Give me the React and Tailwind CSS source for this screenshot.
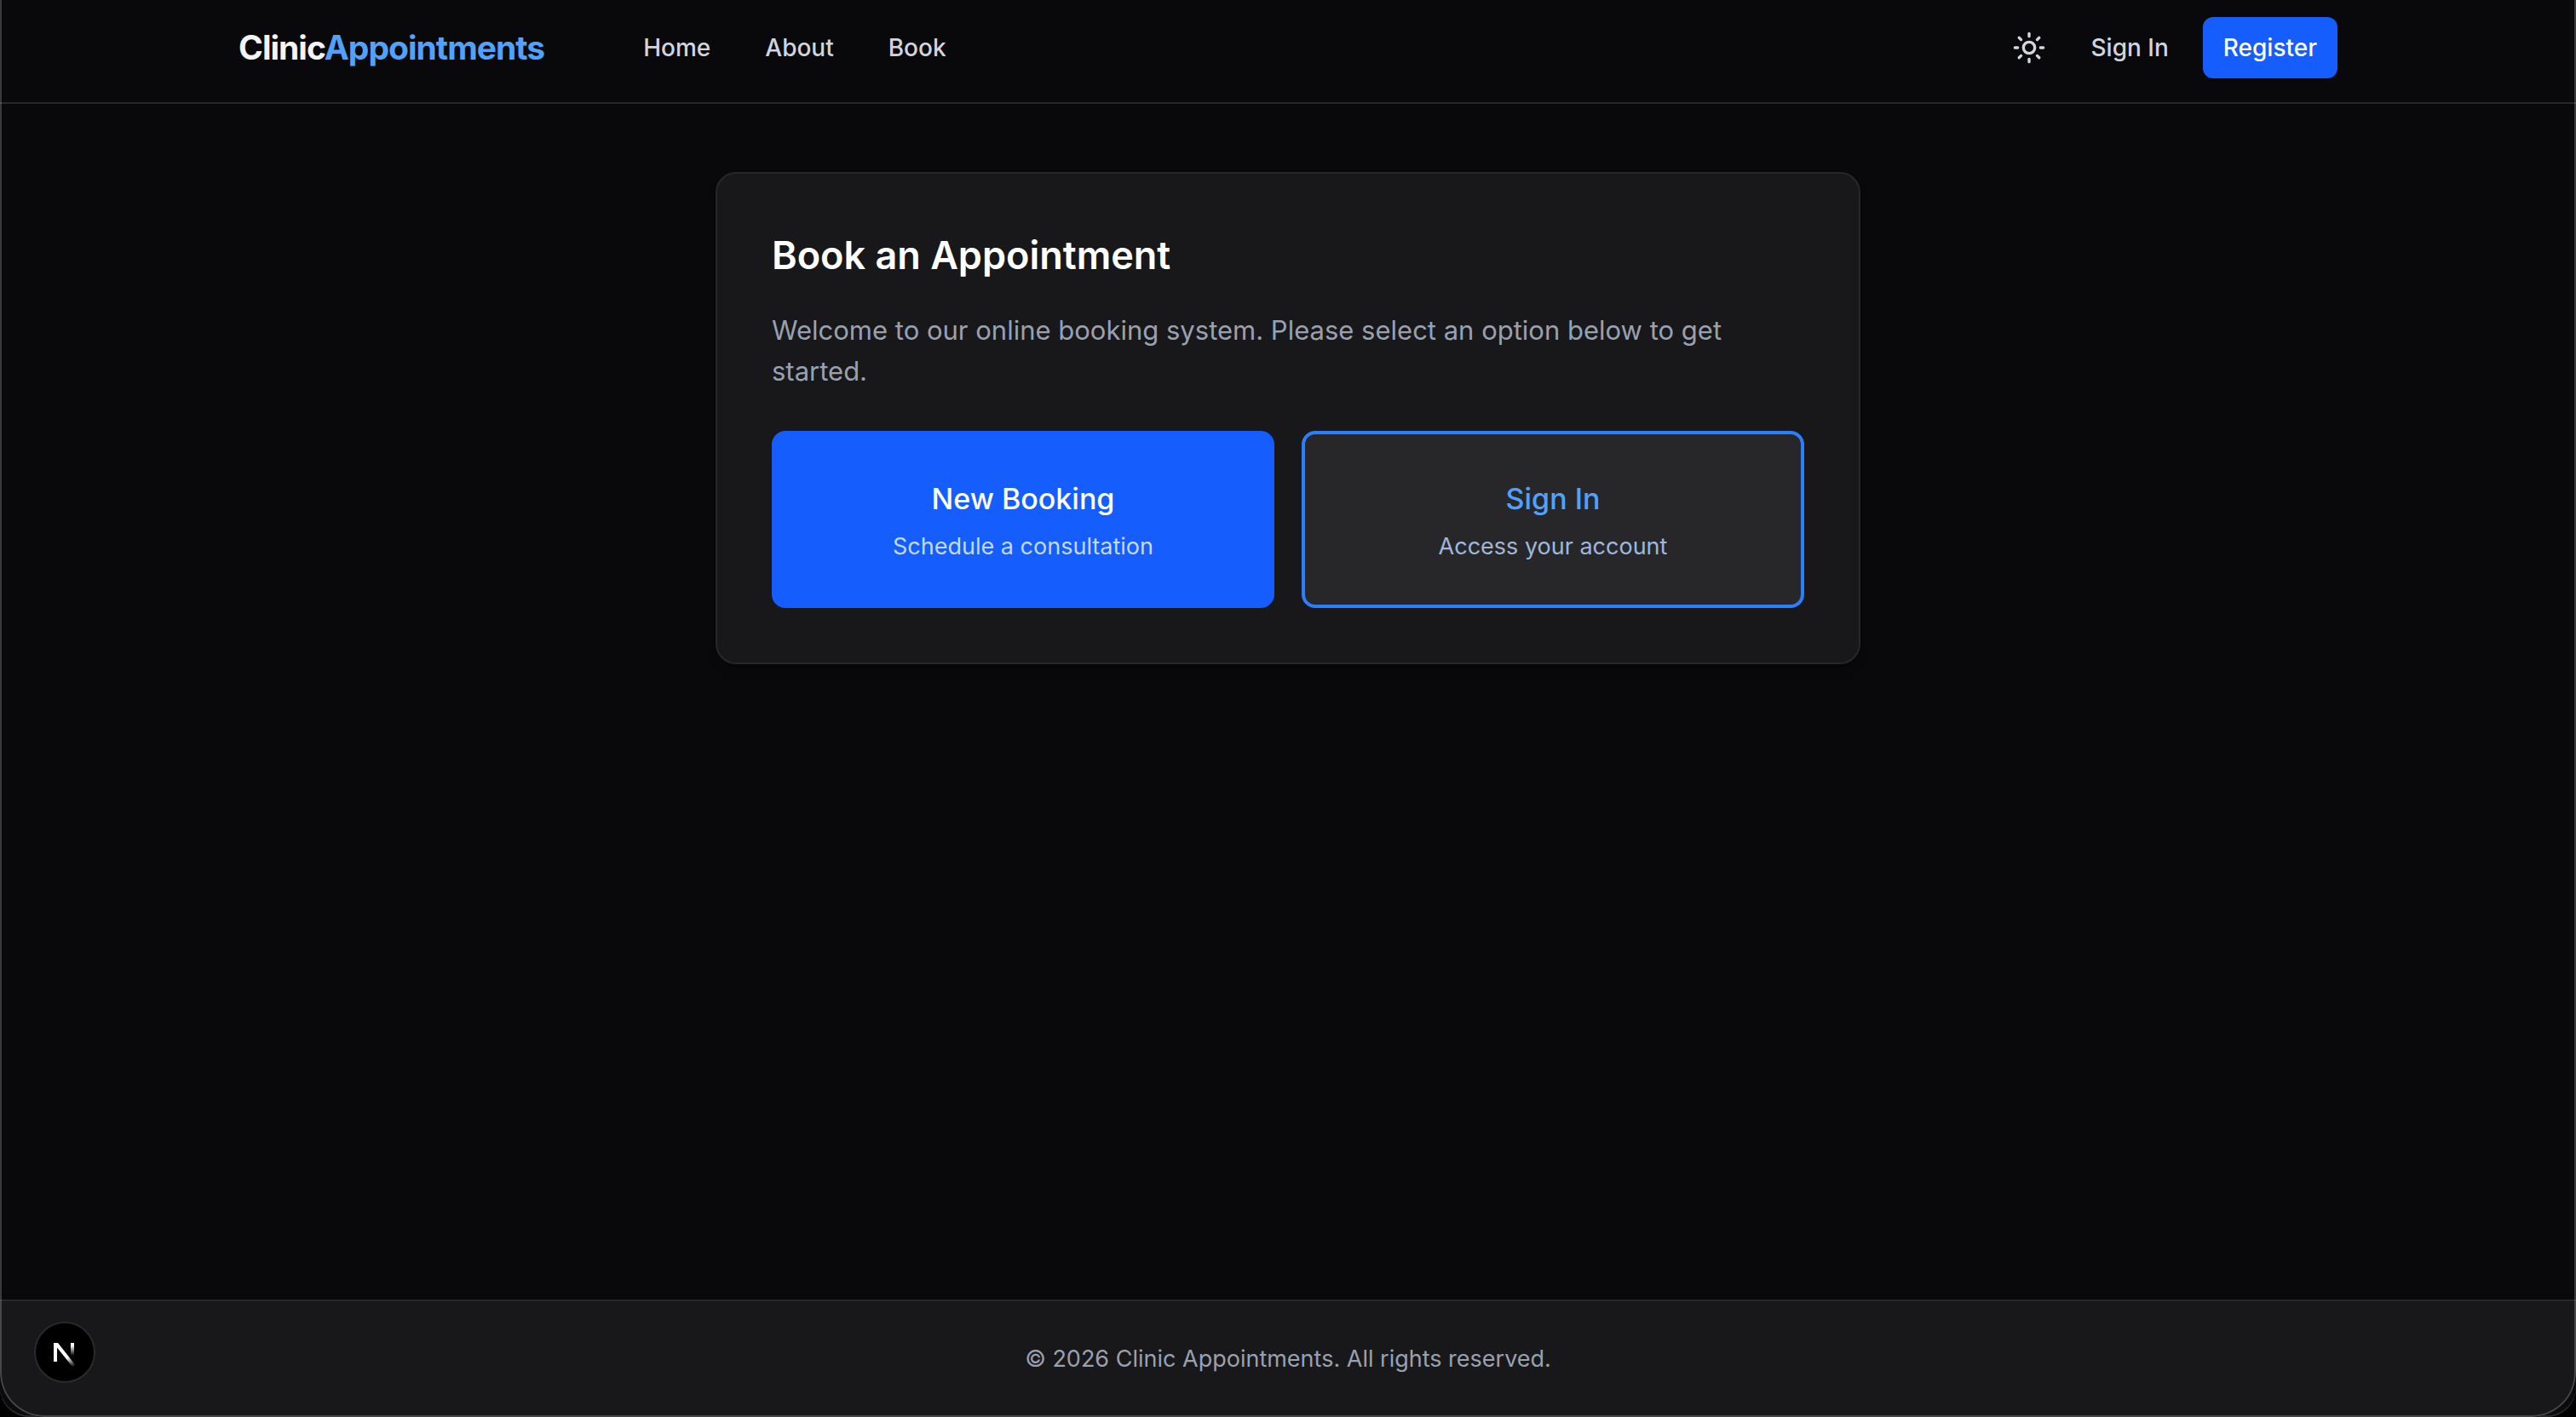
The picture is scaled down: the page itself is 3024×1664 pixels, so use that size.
import { Sun } from 'lucide-react';

const links = ['Home', 'About', 'Book'];

function NextBadge() {
  return (
    <button aria-label="Open Next.js Dev Tools" className="absolute bottom-10 left-10 size-18 rounded-full border-2 border-[#2a2a2a] bg-black">
      <svg viewBox="0 0 68 68" fill="none" className="size-full">
        <defs>
          <linearGradient id="stem" x1="43" y1="26" x2="43" y2="38" gradientUnits="userSpaceOnUse">
            <stop stopColor="#fff" />
            <stop offset="1" stopColor="#fff" stopOpacity="0" />
          </linearGradient>
          <linearGradient id="slash" x1="37" y1="40" x2="45" y2="51" gradientUnits="userSpaceOnUse">
            <stop stopColor="#fff" />
            <stop offset="1" stopColor="#fff" stopOpacity="0" />
          </linearGradient>
        </defs>
        <path d="M21 23H26L46.5 49L43.5 51.5L25 28.5V45H21V23Z" fill="url(#slash)" />
        <path d="M43 23V39" stroke="url(#stem)" strokeWidth="4" />
      </svg>
    </button>
  );
}

export default function App() {
  return (
    <div className="bg-black font-['Inter',sans-serif]">
      <div className="rounded-b-[34px] bg-[#0b0b0b] shadow-[inset_0_-2px_0_#2a2a2a]">
        <div className="relative flex min-h-screen flex-col overflow-hidden rounded-b-[52px] bg-[#09090b] text-white">
          <header className="border-b-2 border-[#27272a]">
            <div className="mx-auto flex max-w-[2560px] items-center justify-between px-12 pt-5 pb-7">
              <div className="flex items-center gap-29">
                <a href="#" className="text-[39px] leading-14 font-bold tracking-tight text-zinc-100">
                  Clinic<span className="text-blue-400">Appointments</span>
                </a>
                <nav className="flex gap-16 text-[28px] leading-10 font-medium text-gray-300">
                  {links.map((link) => (
                    <a key={link} href="#">{link}</a>
                  ))}
                </nav>
              </div>
              <div className="flex items-center gap-10 text-[28px] leading-10 font-medium">
                <button aria-label="Toggle theme" className="p-3 text-gray-300">
                  <Sun className="size-10" />
                </button>
                <a href="#" className="text-gray-300">Sign In</a>
                <a href="#" className="rounded-xl bg-blue-600 px-6 py-4 text-white">Register</a>
              </div>
            </div>
          </header>

          <main className="flex-1 px-12 pt-20">
            <section className="mx-auto max-w-[1344px] rounded-3xl border-2 border-[#27272a] bg-[#18181b] p-16 shadow-lg">
              <h1 className="text-[45px] leading-16 font-semibold">Book an Appointment</h1>
              <p className="mt-8 text-[31px] leading-12 text-gray-400">
                Welcome to our online booking system. Please select an option below to get started.
              </p>
              <div className="mt-[46px] grid grid-cols-2 gap-8 text-center">
                <a href="#" className="rounded-2xl border-4 border-blue-600 bg-blue-600 px-8 py-12">
                  <div className="text-[34px] leading-14 font-medium">New Booking</div>
                  <div className="mt-2 text-[27px] leading-10 text-blue-100/90">Schedule a consultation</div>
                </a>
                <a href="#" className="rounded-2xl border-4 border-blue-500 bg-[#27272a] px-8 py-12">
                  <div className="text-[34px] leading-14 font-medium text-blue-400">Sign In</div>
                  <div className="mt-2 text-[27px] leading-10 text-blue-200/80">Access your account</div>
                </a>
              </div>
            </section>
          </main>

          <footer className="border-t-2 border-[#27272a] bg-[#18181b] py-12 text-center text-[27px] leading-10 text-gray-400">
            © 2026 Clinic Appointments. All rights reserved.
          </footer>

          <NextBadge />
          <div className="pointer-events-none absolute inset-0 rounded-b-[52px] border-2 border-t-0 border-white/20" />
        </div>
      </div>
    </div>
  );
}
